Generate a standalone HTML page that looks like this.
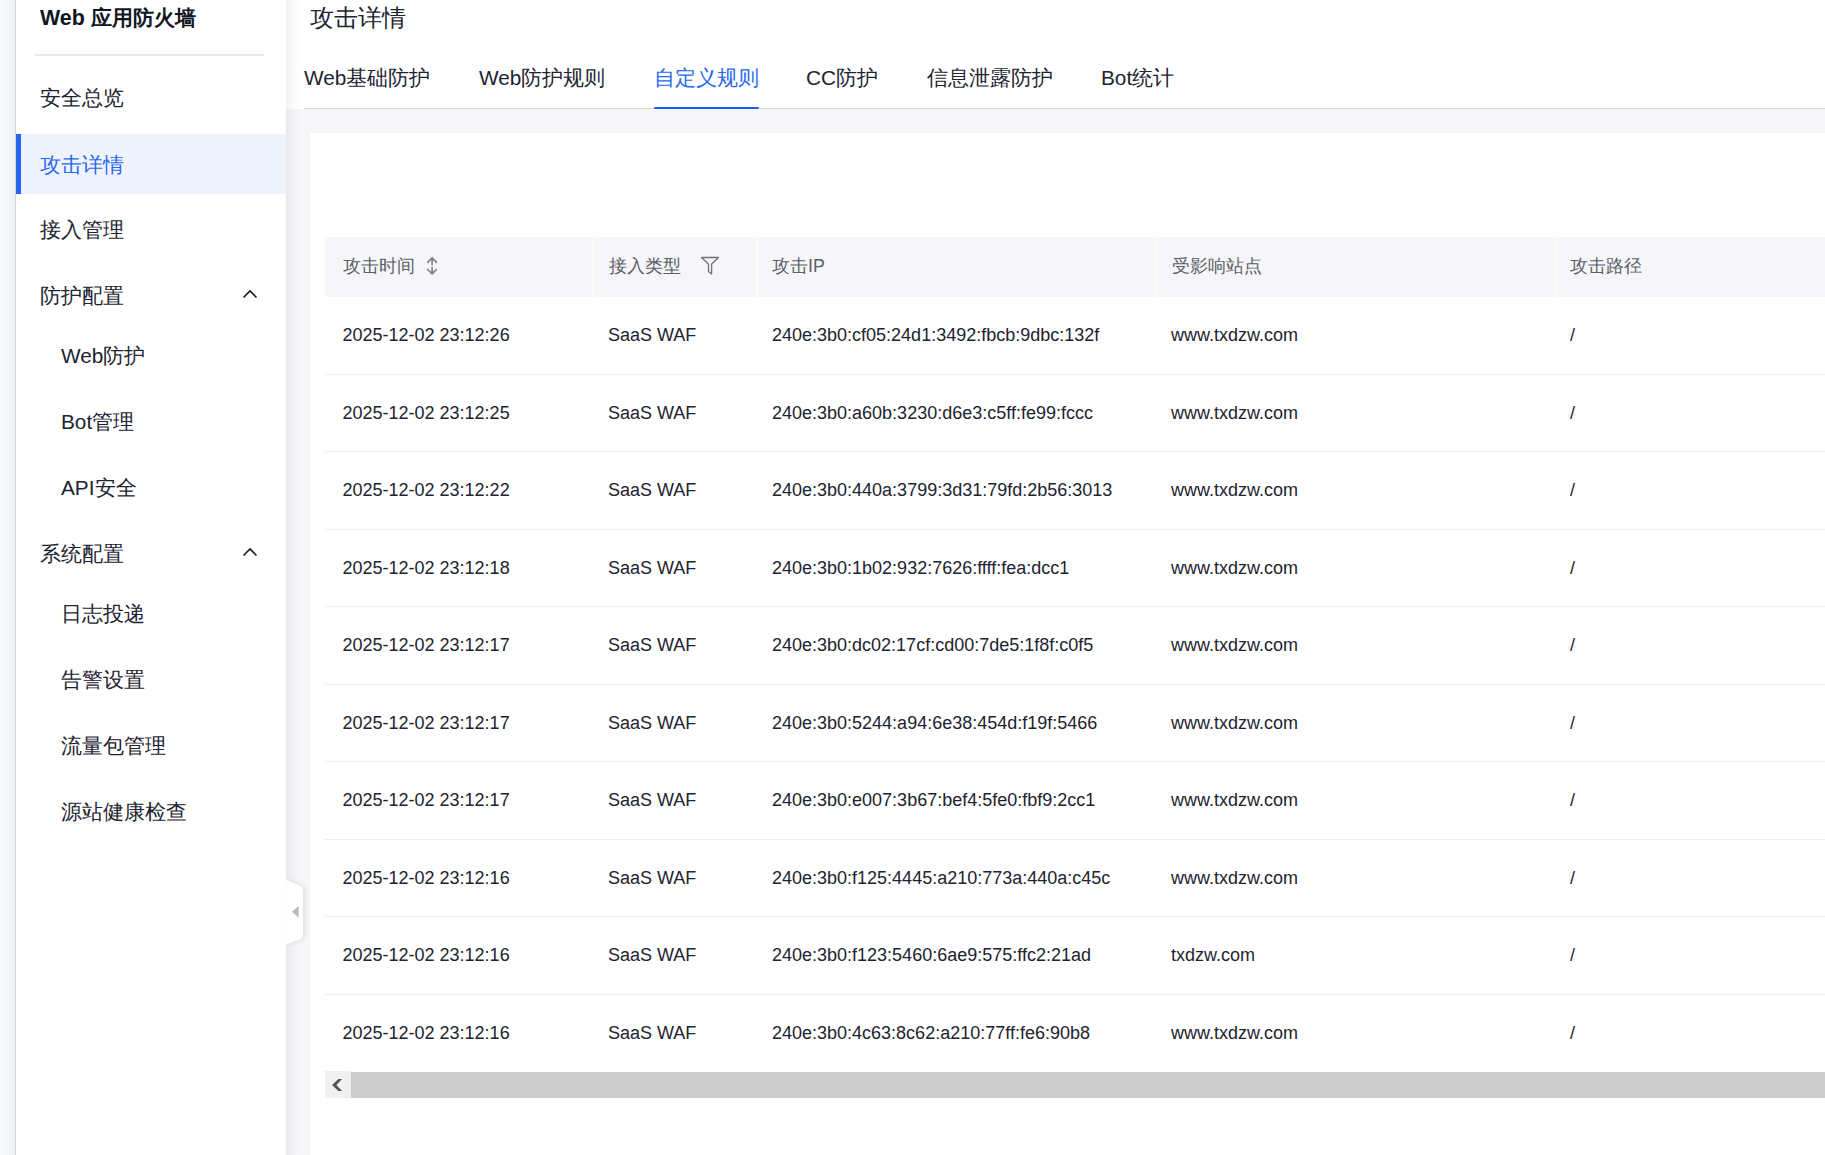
<!DOCTYPE html>
<html><head><meta charset="utf-8">
<style>
*{margin:0;padding:0;box-sizing:border-box}
html,body{width:1825px;height:1155px;overflow:hidden;background:#f6f6f9;font-family:"Liberation Sans",sans-serif;color:#1d2330}
.abs{position:absolute}
#lstrip{position:absolute;left:0;top:0;width:16px;height:1155px;background:linear-gradient(to right,#f8f9fb,#f4f5f7 60%,#eeeff2)}
#side{position:absolute;left:16px;top:0;width:270px;height:1155px;background:#fff;box-shadow:-1px 0 0 #d5d6da;z-index:3}
#side .brand{position:absolute;left:24px;top:4px;font-size:21.4px;font-weight:bold;line-height:28px;color:#111722;white-space:nowrap}
#side .div{position:absolute;left:19px;top:54px;width:229px;height:2px;background:#e6e8ec}
.mi{position:absolute;left:0;width:270px;height:60px;line-height:61px;font-size:20.8px;color:#1d2330;padding-left:24px;white-space:nowrap}
.mi.sub{padding-left:45px}
.mi.act{background:#eef3fd;color:#2868f0}
.mi.act:before{content:"";position:absolute;left:0;top:0;width:5px;height:60px;background:#2563f0}
.chev{position:absolute;right:28px;top:23.5px;width:16px;height:10px}
#hdr{position:absolute;left:286px;top:0;width:1539px;height:109px;background:#fff;z-index:1}
#hdr .title{position:absolute;left:23.5px;top:1.5px;font-size:24.2px;line-height:32px;color:#1d2330;white-space:nowrap}
#hdr .tabs{position:absolute;left:18px;top:56px;height:53px;right:0;border-bottom:1px solid #d3d4d8}
.tab{position:absolute;top:0;font-size:20.8px;line-height:44px;color:#1d2330;white-space:nowrap}
.tab.act{color:#2868f0}
.tab.act:after{content:"";position:absolute;left:0;right:0;top:51px;height:2px;border-radius:1px;background:#1b5ef2}
#card{position:absolute;left:310px;top:133px;width:1515px;height:1022px;background:#fff}
.thead{position:absolute;left:325px;top:237px;width:1500px;height:60px;background:#f6f6f9;z-index:2}
.th{position:absolute;top:0;height:60px;line-height:59px;font-size:17.8px;color:#5b6068;white-space:nowrap}
.sep{position:absolute;top:0;width:1px;height:60px;background:#fff}
.row{position:absolute;left:325px;width:1500px;height:30px;z-index:2}
.rb{position:absolute;left:325px;width:1500px;height:1px;background:#eceef1;z-index:2}
.row span{position:absolute;top:0;line-height:30px;font-size:18px;color:#1d2330;white-space:nowrap}
.c1{left:17.5px} .c2{left:283px} .c3{left:447px} .c4{left:846px} .c5{left:1245px}
#sb{position:absolute;left:325px;top:1071px;width:1500px;height:27px;z-index:2}
#sb .thumb{position:absolute;left:26px;top:1px;right:0;height:26px;background:#cdcdcd}
#sb .btn{position:absolute;left:0;top:0;width:26px;height:27px;background:#f0f0f0}
#shadow{position:absolute;left:286px;top:0;width:14px;height:1155px;background:linear-gradient(to right,rgba(0,0,0,0.055),rgba(0,0,0,0.02) 50%,rgba(0,0,0,0));z-index:2}
</style></head><body>
<div id="lstrip"></div>
<div id="side">
  <div class="brand">Web 应用防火墙</div>
  <div class="div"></div>
  <div class="mi" style="top:67px">安全总览</div>
  <div class="mi act" style="top:134px">攻击详情</div>
  <div class="mi" style="top:199px">接入管理</div>
  <div class="mi" style="top:265px">防护配置<svg class="chev" viewBox="0 0 16 10"><path d="M1.5 8.5 L8 2 L14.5 8.5" fill="none" stroke="#141a24" stroke-width="1.6"/></svg></div>
  <div class="mi sub" style="top:325px">Web防护</div>
  <div class="mi sub" style="top:391px">Bot管理</div>
  <div class="mi sub" style="top:457px">API安全</div>
  <div class="mi" style="top:523px">系统配置<svg class="chev" viewBox="0 0 16 10"><path d="M1.5 8.5 L8 2 L14.5 8.5" fill="none" stroke="#141a24" stroke-width="1.6"/></svg></div>
  <div class="mi sub" style="top:583px">日志投递</div>
  <div class="mi sub" style="top:649px">告警设置</div>
  <div class="mi sub" style="top:715px">流量包管理</div>
  <div class="mi sub" style="top:781px">源站健康检查</div>
</div>
<div id="hdr">
  <div class="title">攻击详情</div>
  <div class="tabs">
    <div class="tab" style="left:0">Web基础防护</div>
    <div class="tab" style="left:175px">Web防护规则</div>
    <div class="tab act" style="left:350px">自定义规则</div>
    <div class="tab" style="left:502px">CC防护</div>
    <div class="tab" style="left:623px">信息泄露防护</div>
    <div class="tab" style="left:797px">Bot统计</div>
  </div>
</div>
<div id="shadow"></div>
<div id="card"></div>
<div class="thead">
  <div class="th" style="left:18px">攻击时间</div>
  <div class="sep" style="left:268px"></div>
  <div class="th" style="left:284px">接入类型</div>
  <div class="sep" style="left:432px"></div>
  <div class="th" style="left:447px">攻击IP</div>
  <div class="sep" style="left:831px"></div>
  <div class="th" style="left:847px">受影响站点</div>
  <div class="sep" style="left:1230px"></div>
  <div class="th" style="left:1245px">攻击路径</div>
</div>
<svg class="abs" style="left:424px;top:254px;z-index:3" width="17" height="24" viewBox="0 0 17 24"><path d="M3.8 8.4 L8.1 3.7 L12.4 8.4 M8.1 3.8 L8.1 10.5 M8.1 13.4 L8.1 19.8 M3.8 15.5 L8.1 19.8 L12.4 15.5" fill="none" stroke="#7f8289" stroke-width="1.7" stroke-linecap="round" stroke-linejoin="round"/></svg>
<svg class="abs" style="left:699px;top:255px;z-index:3" width="22" height="22" viewBox="0 0 22 22"><path d="M2.5 2.5 L19.5 2.5 L12.6 9 L12.6 19 L9.5 16.6 L9.5 9 Z" fill="none" stroke="#70747b" stroke-width="1.3" stroke-linejoin="round"/></svg>
<div class="row" style="top:320.20px"><span class="c1">2025-12-02 23:12:26</span><span class="c2">SaaS WAF</span><span class="c3">240e:3b0:cf05:24d1:3492:fbcb:9dbc:132f</span><span class="c4">www.txdzw.com</span><span class="c5">/</span></div>
<div class="rb" style="top:374px"></div>
<div class="row" style="top:397.70px"><span class="c1">2025-12-02 23:12:25</span><span class="c2">SaaS WAF</span><span class="c3">240e:3b0:a60b:3230:d6e3:c5ff:fe99:fccc</span><span class="c4">www.txdzw.com</span><span class="c5">/</span></div>
<div class="rb" style="top:451px"></div>
<div class="row" style="top:475.20px"><span class="c1">2025-12-02 23:12:22</span><span class="c2">SaaS WAF</span><span class="c3">240e:3b0:440a:3799:3d31:79fd:2b56:3013</span><span class="c4">www.txdzw.com</span><span class="c5">/</span></div>
<div class="rb" style="top:529px"></div>
<div class="row" style="top:552.70px"><span class="c1">2025-12-02 23:12:18</span><span class="c2">SaaS WAF</span><span class="c3">240e:3b0:1b02:932:7626:ffff:fea:dcc1</span><span class="c4">www.txdzw.com</span><span class="c5">/</span></div>
<div class="rb" style="top:606px"></div>
<div class="row" style="top:630.20px"><span class="c1">2025-12-02 23:12:17</span><span class="c2">SaaS WAF</span><span class="c3">240e:3b0:dc02:17cf:cd00:7de5:1f8f:c0f5</span><span class="c4">www.txdzw.com</span><span class="c5">/</span></div>
<div class="rb" style="top:684px"></div>
<div class="row" style="top:707.70px"><span class="c1">2025-12-02 23:12:17</span><span class="c2">SaaS WAF</span><span class="c3">240e:3b0:5244:a94:6e38:454d:f19f:5466</span><span class="c4">www.txdzw.com</span><span class="c5">/</span></div>
<div class="rb" style="top:761px"></div>
<div class="row" style="top:785.20px"><span class="c1">2025-12-02 23:12:17</span><span class="c2">SaaS WAF</span><span class="c3">240e:3b0:e007:3b67:bef4:5fe0:fbf9:2cc1</span><span class="c4">www.txdzw.com</span><span class="c5">/</span></div>
<div class="rb" style="top:839px"></div>
<div class="row" style="top:862.70px"><span class="c1">2025-12-02 23:12:16</span><span class="c2">SaaS WAF</span><span class="c3">240e:3b0:f125:4445:a210:773a:440a:c45c</span><span class="c4">www.txdzw.com</span><span class="c5">/</span></div>
<div class="rb" style="top:916px"></div>
<div class="row" style="top:940.20px"><span class="c1">2025-12-02 23:12:16</span><span class="c2">SaaS WAF</span><span class="c3">240e:3b0:f123:5460:6ae9:575:ffc2:21ad</span><span class="c4">txdzw.com</span><span class="c5">/</span></div>
<div class="rb" style="top:994px"></div>
<div class="row" style="top:1017.70px"><span class="c1">2025-12-02 23:12:16</span><span class="c2">SaaS WAF</span><span class="c3">240e:3b0:4c63:8c62:a210:77ff:fe6:90b8</span><span class="c4">www.txdzw.com</span><span class="c5">/</span></div>

<div id="sb"><div class="thumb"></div><div class="btn"><svg width="26" height="27" viewBox="0 0 26 27"><path d="M7.1 14 L13.3 8 L17.1 8 L11.4 14 L17.1 20 L13.3 20 Z" fill="#555"/></svg></div></div>
<svg class="abs" style="left:286px;top:880px;z-index:4;filter:drop-shadow(2px 0 2px rgba(0,0,0,0.09))" width="24" height="66" viewBox="0 0 24 66"><path d="M0 0 L13 5 Q17 6.5 17 10.5 L17 54.5 Q17 58.5 13 60 L0 64.5 Z" fill="#fff"/><path d="M12.7 25.7 L6.1 31.7 L12.7 37.8 Z" fill="#b8bbc1"/></svg>
</body></html>
